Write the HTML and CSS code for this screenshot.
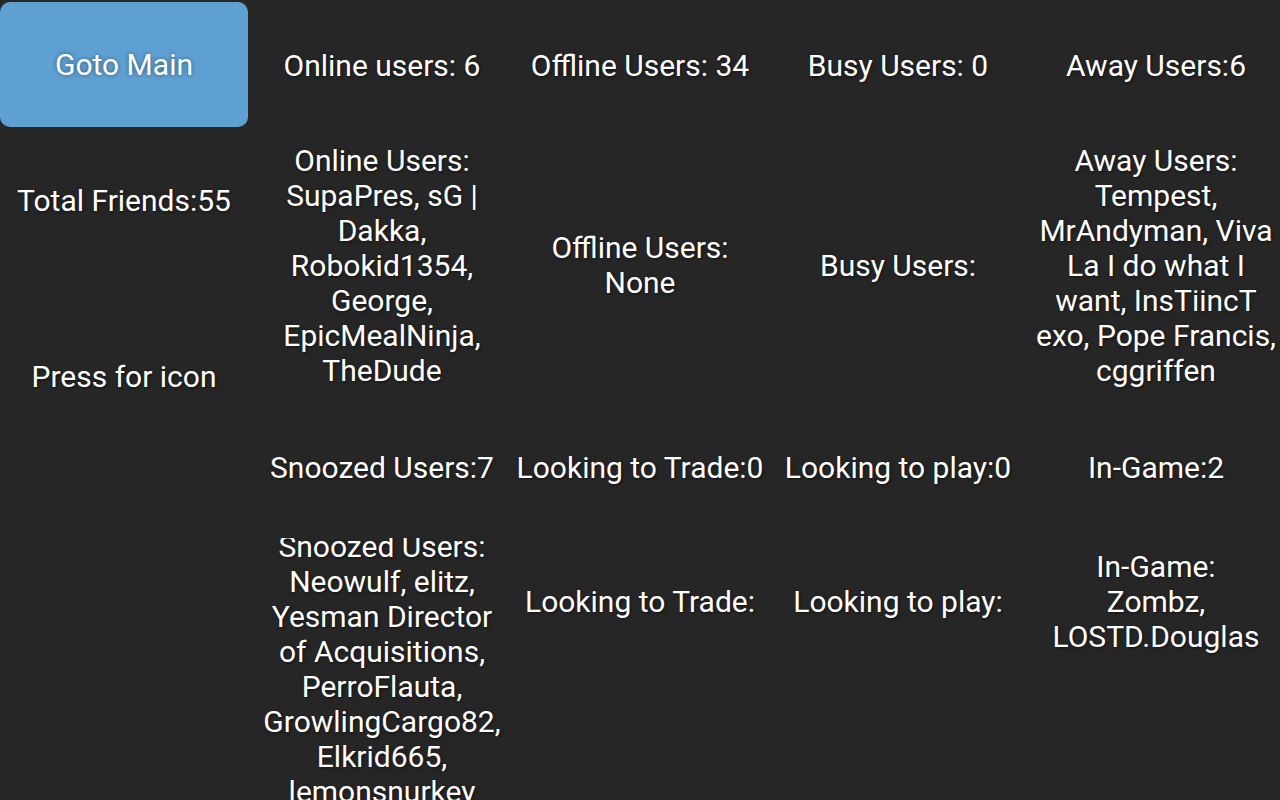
FILE: index.html
```html
<!DOCTYPE html>
<html>
<head>
<meta charset="utf-8">
<title>Friends</title>
<link rel="stylesheet" href="styles.css">
</head>
<body>
<div class="screen">
  <div class="side">
    <button class="main-btn">Goto Main</button>
    <div class="side-label friends">Total Friends:55</div>
    <div class="side-label icon">Press for icon</div>
  </div>
  <div class="grid">
    <div class="cell r1">Online users: 6</div>
    <div class="cell r1">Offline Users: 34</div>
    <div class="cell r1">Busy Users: 0</div>
    <div class="cell r1">Away Users:6</div>

    <div class="cell r2">Online Users:<br>SupaPres, sG |<br>Dakka,<br>Robokid1354,<br>George,<br>EpicMealNinja,<br>TheDude</div>
    <div class="cell r2">Offline Users:<br>None</div>
    <div class="cell r2">Busy Users:</div>
    <div class="cell r2">Away Users:<br>Tempest,<br>MrAndyman, Viva<br>La I do what I<br>want, InsTiincT<br>exo, Pope Francis,<br>cggriffen</div>

    <div class="cell r3">Snoozed Users:7</div>
    <div class="cell r3">Looking to Trade:0</div>
    <div class="cell r3">Looking to play:0</div>
    <div class="cell r3">In-Game:2</div>

    <div class="cell r4 overflow"><div class="overflow-text">Snoozed Users:<br>Neowulf, elitz,<br>Yesman Director<br>of Acquisitions,<br>PerroFlauta,<br>GrowlingCargo82,<br>Elkrid665,<br>lemonsnurkey</div></div>
    <div class="cell r4">Looking to Trade:</div>
    <div class="cell r4">Looking to play:</div>
    <div class="cell r4">In-Game:<br>Zombz,<br>LOSTD.Douglas</div>
  </div>
</div>
</body>
</html>
```

FILE: styles.css
```css
html, body {
  margin: 0;
  padding: 0;
  background: #262626;
  height: 800px;
  overflow: hidden;
}

.screen {
  display: flex;
  gap: 10px;
  width: 1280px;
  height: 800px;
  font-family: Roboto, "Noto Sans", sans-serif;
  font-size: 30px;
  line-height: 35px;
  color: #ffffff;
  text-shadow: 1px 1px 3px rgba(0, 0, 0, 0.55);
}

.side {
  width: 248px;
  flex: none;
  display: flex;
  flex-direction: column;
}

.main-btn {
  margin-top: 2px;
  height: 125px;
  width: 248px;
  border: none;
  border-radius: 10px;
  background: #5ea0d2;
  color: #ffffff;
  font: inherit;
  text-shadow: 0 0 4px rgba(0, 0, 0, 0.45);
  padding: 0;
}

.side-label {
  text-align: center;
  display: flex;
  align-items: center;
  justify-content: center;
}

.friends {
  height: 138px;
  padding-top: 4px;
}

.icon {
  height: 214px;
}

.grid {
  flex: 1;
  display: grid;
  grid-template-columns: repeat(4, 248px);
  column-gap: 10px;
  grid-template-rows: 130px 270px 134px 134px;
}

.cell {
  display: flex;
  align-items: center;
  justify-content: center;
  text-align: center;
  min-width: 0;
  white-space: nowrap;
}

.overflow {
  align-self: start;
  align-items: flex-start;
  height: 266px;
  overflow: hidden;
  clip-path: inset(4px 0 0 0);
}

.overflow-text {
  margin-top: -5px;
}
```
